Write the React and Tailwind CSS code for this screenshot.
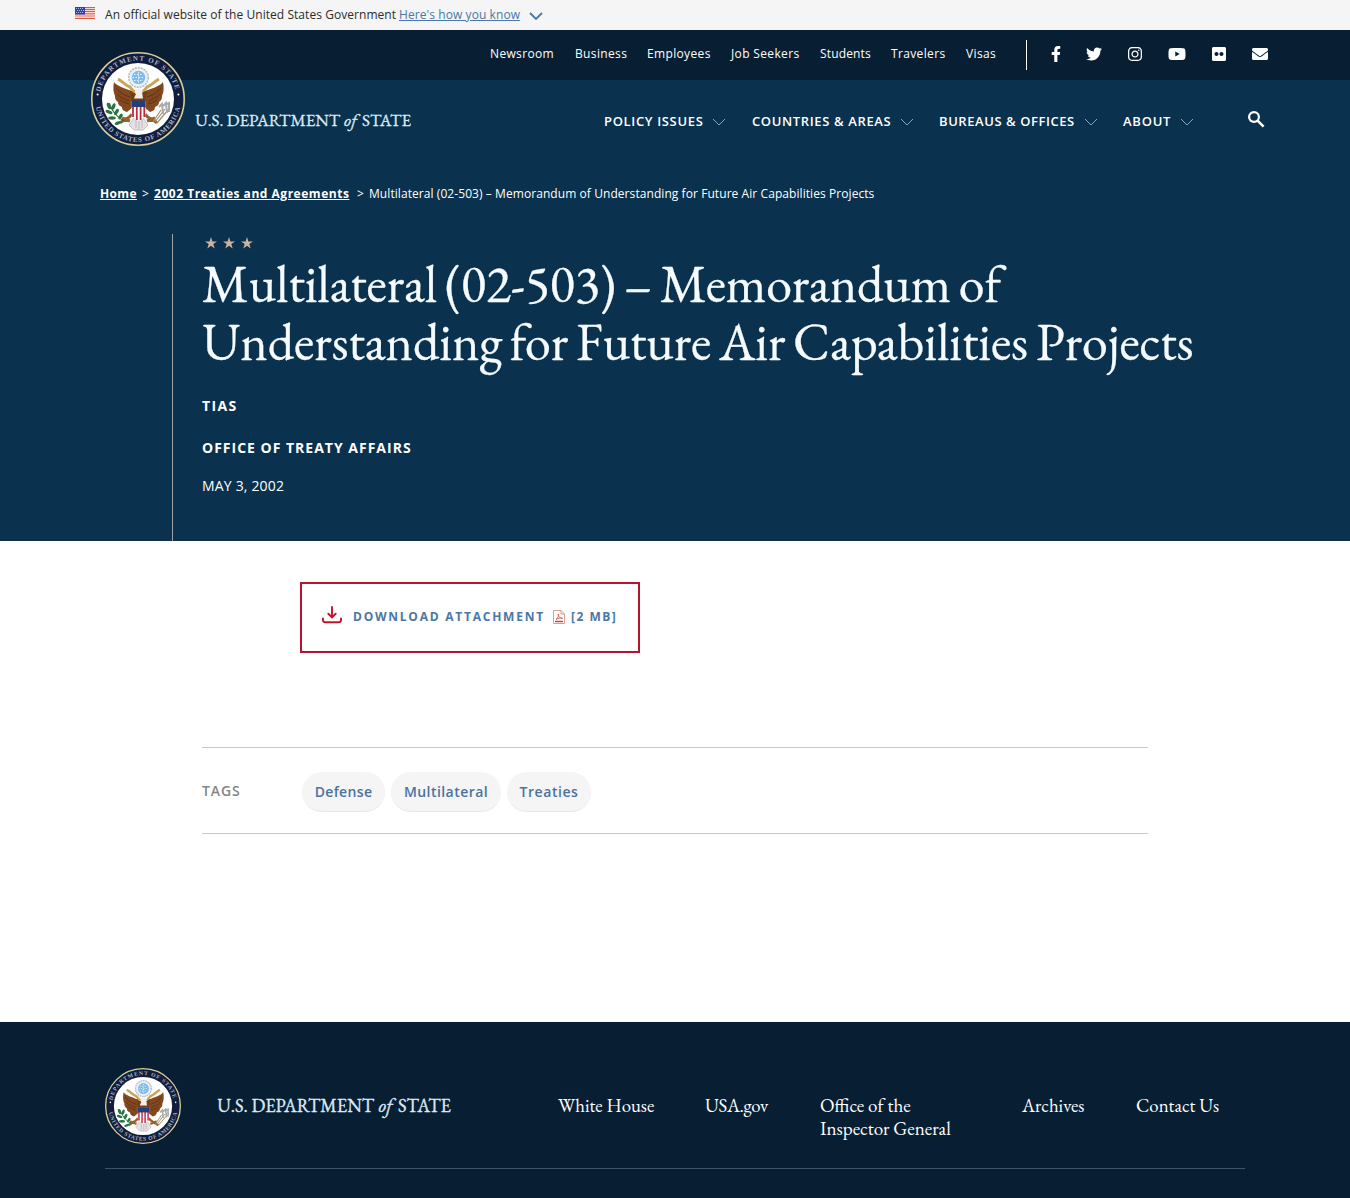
import React from "react";
import { FaFacebookF, FaTwitter, FaInstagram, FaYoutube, FaFlickr, FaEnvelope } from "react-icons/fa";

const SERIF = "font-['EB_Garamond','Liberation_Serif',serif]";

function Seal({ className, id }) {
  return (
    <svg className={className} viewBox="0 0 94 94" role="img" aria-label="Department of State seal">
      <defs>
        <path id={id + "-top"} d="M 8.6 47 A 38.4 38.4 0 0 1 85.4 47" />
        <path id={id + "-bottom"} d="M 4.1 47 A 42.9 42.9 0 0 0 89.9 47" />
      </defs>
      <circle cx="47" cy="47" r="46.2" fill="#101d3c" stroke="#d9cf9c" strokeWidth="1.6" />
      <circle cx="47" cy="47" r="36" fill="#fff" />
      <g fill="#aab4c6" fontFamily="Liberation Serif, serif" fontSize="7" fontWeight="bold">
        <text textLength="104"><textPath href={"#" + id + "-top"} startOffset="7" textLength="104">DEPARTMENT OF STATE</textPath></text>
        <text textLength="118"><textPath href={"#" + id + "-bottom"} startOffset="8" textLength="118">UNITED STATES OF AMERICA</textPath></text>
      </g>
      <circle cx="6.6" cy="42.5" r="1" fill="#fff" />
      <circle cx="87.4" cy="42.5" r="1" fill="#fff" />
      {/* glory of stars */}
      <circle cx="47.5" cy="25.5" r="9.8" fill="#eef1f4" stroke="#b9bec5" strokeWidth="1.6" strokeDasharray="2.2 .8" />
      <circle cx="47.5" cy="25.5" r="6.8" fill="#7fbce8" />
      <path d="M43 22.5h9M41.5 25.5h12M43 28.5h9M47.5 20v11" stroke="#e4f2fb" strokeWidth="1" strokeDasharray="1.5 1.5" />
      {/* wings */}
      <path d="M23 30c3 4 10 6 18 9l1 16-6 5c-4-1-5-3-5-5-3-1-4-3-4-5-3-2-3-4-3-6-2-4-2-9-1-14Z" fill="#84481f" />
      <path d="M72 30c-3 4-10 6-18 9l-1 16 6 5c4-1 5-3 5-5 3-1 4-3 4-5 3-2 3-4 3-6 2-4 2-9 1-14Z" fill="#84481f" />
      <path d="M25 36c4 5 8 7 14 9M26 42c4 4 7 5 12 7M29 48c3 2 5 3 9 4M70 36c-4 5-8 7-14 9M69 42c-4 4-7 5-12 7M66 48c-3 2-5 3-9 4" stroke="#5b2f14" strokeWidth=".9" fill="none" />
      {/* scroll and head */}
      <path d="M27 27c5 3 7 6 12 8l4 5M68 27c-5 3-7 6-12 8l-4 5" stroke="#c9a65a" strokeWidth="3" fill="none" />
      <path d="M39 39c3 0 4 3 8 2 4 1 6-2 9-2l-2 11H41Z" fill="#704019" />
      <path d="M44 37.500c3-2 7-1 7 2l1 7h-9c1-3 3-5 1-5Z" fill="#f2f0e8" />
      <path d="m44 38-3 2 3 .7Z" fill="#d89a25" />
      {/* legs and tail */}
      <path d="M41 62c-3 5-8 5-12 9M54 62c3 5 8 5 12 9M31 66l8 3M64 66l-8 3" stroke="#98632a" strokeWidth="3" fill="none" />
      <path d="M43 66h9l5 7-5 5h-9l-5-5Z" fill="#e4e2e6" stroke="#aaa7af" strokeWidth=".7" />
      <path d="M45 68v8M48 68v9M51 68v8" stroke="#aaa7af" strokeWidth=".7" />
      {/* shield */}
      <path d="M40.7 49h13.8v13c0 3-3 5-6.9 7-4-2-6.9-4-6.9-7Z" fill="#fff" />
      <path d="M42 53v12M45.8 53v15M49.6 53v15M53.3 53v12" stroke="#bd2b3c" strokeWidth="1.8" />
      <path d="M40.7 48.5h13.8V55H40.7Z" fill="#263d7c" />
      {/* olive branch and arrows */}
      <path d="M18 51c3 7 6 13 15 18" stroke="#276d3c" strokeWidth="1.2" fill="none" />
      <g fill="#267542">
        <ellipse cx="18" cy="54" rx="1.8" ry="3.5" transform="rotate(-25 18 54)" />
        <ellipse cx="22.5" cy="54.5" rx="1.7" ry="3.4" transform="rotate(20 22.5 54.5)" />
        <ellipse cx="18" cy="60" rx="3.6" ry="1.7" transform="rotate(20 18 60)" />
        <ellipse cx="25.5" cy="60" rx="1.7" ry="3.6" transform="rotate(30 25.5 60)" />
        <ellipse cx="21" cy="66" rx="3.8" ry="1.7" />
        <ellipse cx="29.5" cy="64.5" rx="1.6" ry="3.2" transform="rotate(30 29.5 64.5)" />
        <ellipse cx="27" cy="71" rx="3.4" ry="1.5" transform="rotate(-20 27 71)" />
      </g>
      <path d="m62 70 8-12M64 70l10-13M66 71l11-13" stroke="#a08f70" strokeWidth="1.2" />
      <path d="m68 55 3-3 1 10M72 54l3-3 1 10M76 52l2-1v9" stroke="#a8aaab" strokeWidth="2" fill="none" />
    </svg>
  );
}

function Wordmark({ className }) {
  return (
    <svg className={className} viewBox="0 0 216 24" fill="#dfeaf3" fontFamily="EB Garamond, Liberation Serif, serif" fontSize="16.5" stroke="#dfeaf3" strokeWidth=".3">
      <text x=".2" y="16.8" textLength="144.8" lengthAdjust="spacingAndGlyphs">U.S. DEPARTMENT</text>
      <text x="149" y="16.8" textLength="13" fontStyle="italic" lengthAdjust="spacingAndGlyphs">of</text>
      <text x="167" y="16.8" textLength="49" lengthAdjust="spacingAndGlyphs">STATE</text>
    </svg>
  );
}

function Flag() {
  return (
    <svg className="h-3 w-5" viewBox="0 0 20 12">
      <path fill="#fff" d="M0 0h20v12H0z" />
      <path d="M0 .6h20M0 2.6h20M0 4.6h20M0 6.8h20M0 9h20M0 11.3h20" stroke="#dd5a48" strokeWidth="1.2" />
      <path fill="#2f45a8" d="M0 0h10v7.5H0z" />
      <path d="M1 1.5h8M2 3.5h7M1 5.5h8" stroke="#c6cdec" strokeWidth=".8" strokeDasharray="1 1" />
    </svg>
  );
}

function Chevron({ className }) {
  return (
    <svg className={className} viewBox="0 0 14 8" fill="none" stroke="currentColor">
      <path d="m1 1 6 6 6-6" />
    </svg>
  );
}

const topLinks = [
  ["Newsroom", "w-[85px]"],
  ["Business", "w-[72px]"],
  ["Employees", "w-[84px]"],
  ["Job Seekers", "w-[89px]"],
  ["Students", "w-[71px] tracking-[0.15px]"],
  ["Travelers", "w-[75px]"],
  ["Visas", "w-[60px]"],
];

const navItems = [
  ["POLICY ISSUES", "w-[148px] tracking-[0.66px]"],
  ["COUNTRIES & AREAS", "w-[187px] tracking-[0.63px]"],
  ["BUREAUS & OFFICES", "w-[184px] tracking-[0.56px]"],
  ["ABOUT", "w-[72px] tracking-[0.75px]"],
];

const footerLinks = [
  ["White House", "w-[147px]"],
  ["USA.gov", "w-[115px] tracking-[-0.35px]"],
  ["Office of the Inspector General", "w-[202px] pr-[50px] text-[19.1px]"],
  ["Archives", "w-[114px]"],
  ["Contact Us", "w-[100px]"],
];

const tags = [
  ["Defense", "w-[83px] tracking-[0.35px]"],
  ["Multilateral", "w-[110px] tracking-[0.45px]"],
  ["Treaties", "w-[84px] tracking-[0.55px]"],
];

export default function App() {
  return (
    <div className="h-[1198px] w-full overflow-hidden bg-white font-['Open_Sans',sans-serif] text-white">
      <div className="flex h-[30px] items-center bg-[#f5f5f5] pl-[75px] text-[12px] text-[#2c2c2c]">
        <div className="-mt-1"><Flag /></div>
        <span className="ml-[10px] w-[294px] whitespace-nowrap tracking-[0.05px]">An official website of the United States Government</span>
        <a className="whitespace-nowrap tracking-[0.08px] text-[#4a77a5] underline">Here's how you know</a>
        <Chevron className="ml-[9px] mt-px h-[8px] w-[14px] stroke-[1.8] text-[#4a77a5]" />
      </div>

      <header className="relative">
        <div className="flex h-[50px] bg-[#081f33] pl-[490px] text-[12px] tracking-[0.35px]">
          <nav className="flex w-[536px] pt-[15px] leading-[18px]">
            {topLinks.map(([t, w]) => (
              <a key={t} className={w + " shrink-0 whitespace-nowrap"}>{t}</a>
            ))}
          </nav>
          <div className="mt-[10px] h-[30px] w-px bg-white" />
          <div className="ml-[24px] flex h-12 items-center text-[16px]">
            <FaFacebookF className="w-[10px]" />
            <FaTwitter className="ml-[25px]" />
            <FaInstagram className="ml-[25px]" />
            <FaYoutube className="ml-[25px] text-[18px]" />
            <FaFlickr className="ml-[25px]" />
            <FaEnvelope className="ml-[25px]" />
          </div>
        </div>
        <div className="flex h-[80px] items-start bg-[#0a314d] pl-[195px]">
          <Wordmark className="mt-[29px] h-6 w-[216px]" />
          <nav className="ml-[193px] flex pt-[31px] text-[13px] font-semibold leading-5">
            {navItems.map(([t, w]) => (
              <a key={t} className={w + " flex shrink-0 items-center whitespace-nowrap"}>
                {t}
                <Chevron className="ml-[9px] mt-px h-[8px] w-[14px] shrink-0 text-[#8ba3b5]" />
              </a>
            ))}
          </nav>
          <svg className="ml-auto mr-[85px] mt-[30px] h-[18px] w-[18px]" viewBox="0 0 18 18" fill="none" stroke="currentColor" strokeWidth="2.2">
            <circle cx="7" cy="7" r="4.900" />
            <path d="m10.600 10.600 6 6" strokeWidth="2.600" />
          </svg>
        </div>
        <Seal id="header-seal" className="absolute left-[91px] top-[22px] size-[94px]" />
      </header>

      <section className="h-[381px] bg-[#0a314d] pt-[24px]">
        <div className="flex pl-[100px] text-[12px] leading-5">
          <a className="w-[42px]"><span className="font-bold tracking-[0.35px] underline">Home</span></a>
          <span className="w-[12px]">&gt;</span>
          <a className="w-[203px] whitespace-nowrap"><span className="font-bold tracking-[0.52px] underline">2002 Treaties and Agreements</span></a>
          <span className="w-[12px]">&gt;</span>
          <span className="whitespace-nowrap tracking-[0.07px]">Multilateral (02-503) – Memorandum of Understanding for Future Air Capabilities Projects</span>
        </div>
        <div className="ml-[172px] mt-[30px] h-[307px] border-l border-[#9ea5a9] pl-[29px]">
          <div className="flex gap-[6px] pl-[3px] pt-[3px]">
            {[0, 1, 2].map((i) => (
              <svg key={i} className="size-3" viewBox="0 0 12 12" fill="#cdb3a0">
                <path d="m6 0 1.4 4.4H12L8.3 7.1l1.4 4.400L6 8.800l-3.700 2.700 1.400-4.400L0 4.400h4.600Z" />
              </svg>
            ))}
          </div>
          <h1 className={SERIF + " mt-[6px] w-[1020px] text-[52px] leading-[58px] tracking-[-0.02px] text-[#f5fbff] [word-spacing:-2.5px] [-webkit-text-stroke:0.3px_#f5fbff]"}>
            <span className="tracking-[-0.1px]">Multilateral (02-503) – Memorandum of</span><br />
            Understanding for Future Air Capabilities Projects
          </h1>
          <p className="mt-[25px] text-[14px] font-bold leading-5 tracking-[1.4px]">TIAS</p>
          <p className="mt-[22px] text-[14px] font-bold leading-5 tracking-[1px]">OFFICE OF TREATY AFFAIRS</p>
          <p className="mt-[18px] text-[14px] leading-5 tracking-[0.18px]">MAY 3, 2002</p>
        </div>
      </section>

      <main className="h-[481px] pt-[41px]">
        <a className="ml-[300px] flex h-[71px] w-[340px] items-center border-2 border-[#b9142d] pb-px pl-[20px] text-[12px] font-bold tracking-[1.76px] text-[#4a77a5]">
          <svg className="-mt-[5px] h-[18px] w-5 shrink-0" viewBox="0 0 20 18" fill="none" stroke="#c3142d" strokeWidth="1.9" strokeLinecap="round">
            <path d="M10 1v10M6.3 7.7 10 11.3l3.7-3.6M1 12.500V14c0 1.500 1 2.200 2.200 2.200h13.600c1.200 0 2.200-.7 2.200-2.200v-1.500" />
          </svg>
          <span className="ml-[11px] w-[200px] whitespace-nowrap">DOWNLOAD ATTACHMENT</span>
          <svg className="h-[14px] w-[12px] shrink-0" viewBox="0 0 12 14" fill="none" stroke="#d69388" strokeWidth=".9">
            <path d="M.5.5h7.500l3.500 3.500v9.500H.5ZM8 .5V4h3.500" />
            <path d="M3 9.500c2-1.500 3-4 2.500-5.500-1 1 1 4.500 4 4.300-2-.8-5 .2-6.500 1.200Z" stroke="#c85a4a" />
            <path d="M2 11.500h8" stroke="#b94b3e" strokeWidth="1.500" />
          </svg>
          <span className="ml-[6px] whitespace-nowrap tracking-[1.5px]">[2 MB]</span>
        </a>
        <div className="ml-[202px] mt-[94px] flex h-[87px] w-[946px] border-y border-[#c8c8c8] text-[14px] font-semibold">
          <span className="w-[100px] pt-[33px] leading-5 tracking-[0.9px] text-[#868686]">TAGS</span>
          <div className="flex gap-[6px] pt-[24px] text-[#4a739f]">
            {tags.map(([t, w]) => (
              <a key={t} className={w + " flex h-[40px] items-center justify-center rounded-full border-b border-[#e9e9e9] bg-[#f5f5f5]"}>{t}</a>
            ))}
          </div>
        </div>
      </main>

      <footer className="h-[176px] bg-[#081f33] px-[105px] pt-[46px]">
        <div className="flex h-[101px] border-b border-[#405467]">
          <Seal id="footer-seal" className="size-[76px] shrink-0" />
          <Wordmark className="ml-[36px] mt-[26px] h-[26px] w-[234px] shrink-0" />
          <nav className={SERIF + " ml-[107px] mt-[26px] flex text-[18.8px] leading-[23px]"}>
            {footerLinks.map(([t, w]) => (
              <a key={t} className={w + " shrink-0"}>{t}</a>
            ))}
          </nav>
        </div>
      </footer>
    </div>
  );
}
